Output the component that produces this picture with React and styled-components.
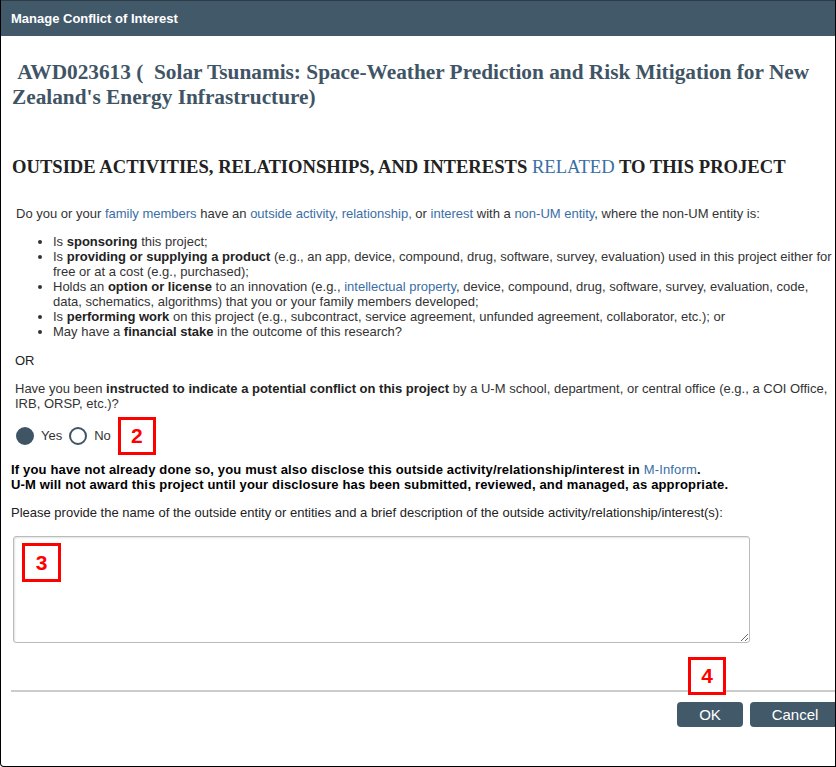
import React from "react";
import styled, { createGlobalStyle } from "styled-components";

const Global = createGlobalStyle`
  html, body { margin: 0; padding: 0; background: #fff; }
  body { font-family: "Liberation Sans", Arial, sans-serif; }
`;

const Dialog = styled.div`
  position: relative;
  box-sizing: border-box;
  width: 836px;
  height: 767px;
  border-left: 1px solid #000;
  border-right: 1px solid #000;
  border-bottom: 1px solid #000;
  border-bottom-left-radius: 4px;
  overflow: hidden;
  display: flex;
  flex-direction: column;
  background: #fff;
`;

const TitleBar = styled.div`
  height: 36px;
  flex: none;
  background: #42596a;
  border-top: 1px solid #2c3c48;
  box-sizing: border-box;
  display: flex;
  align-items: center;
  padding-left: 10px;
  color: #fff;
  font-size: 13px;
  font-weight: bold;
`;

const Body = styled.div`
  padding: 0 0 0 10px;
  display: flex;
  flex-direction: column;
  flex: 1;
`;

const ProjectTitle = styled.h1`
  margin: 24px 0 0 1px;
  font-family: "Liberation Serif", "Times New Roman", serif;
  font-size: 21.3px;
  line-height: 25px;
  font-weight: bold;
  color: #3f5566;
  white-space: pre-wrap;
`;

const SectionHeading = styled.h2`
  margin: 46px 0 0 1px;
  font-family: "Liberation Serif", "Times New Roman", serif;
  font-size: 18.6px;
  line-height: 21px;
  font-weight: bold;
  color: #222;
`;

const Related = styled.span`
  font-weight: normal;
  color: #3a6ea5;
`;

const Question = styled.div`
  padding-left: 4px;
  color: #333;
  font-size: 13px;
  line-height: 15px;
`;

const Para = styled.p`
  margin: ${(p) => p.$top || 0}px 0 0 ${(p) => p.$indent || 0}px;
  color: ${(p) => p.$color || "#333"};
  font-weight: ${(p) => (p.$bold ? "bold" : "normal")};
  letter-spacing: ${(p) => (p.$bold ? "0.16px" : "normal")};
  font-size: 13px;
  line-height: 15px;
`;

const Link = styled.span`
  color: #3a6ea5;
`;

const Strong = styled.b`
  color: #222;
`;

const Bullets = styled.ul`
  margin: 13px 0 0 0;
  padding-left: 38px;
  padding-right: 0;
  li {
    font-size: 13px;
    line-height: 15px;
    color: #333;
  }
`;

const RadioRow = styled.div`
  display: flex;
  align-items: center;
  margin-top: 6px;
  margin-left: 5px;
  height: 37px;
  font-size: 13px;
  color: #333;
`;

const Radio = styled.span`
  box-sizing: border-box;
  width: 18px;
  height: 18px;
  border-radius: 50%;
  border: 2px solid #3f5566;
  background: ${(p) => (p.$checked ? "#3f5566" : "#fff")};
  margin-right: 7px;
`;

const RadioLabel = styled.span`
  margin-right: 7px;
`;

const Marker = styled.div`
  box-sizing: border-box;
  width: ${(p) => p.$size || 38}px;
  height: ${(p) => p.$size || 38}px;
  border: 3px solid #ff0000;
  display: flex;
  align-items: center;
  justify-content: center;
  color: #ff0000;
  font-size: 21px;
  font-weight: bold;
  background: #fff;
`;

const Floating = styled.div`
  position: absolute;
  left: ${(p) => p.$left}px;
  top: ${(p) => p.$top}px;
`;

const AreaWrap = styled.div`
  position: relative;
  margin-top: 16px;
  margin-left: 2px;
  width: 737px;
  height: 107px;
`;

const TextArea = styled.textarea`
  box-sizing: border-box;
  width: 100%;
  height: 100%;
  border: 1px solid #bbb;
  border-radius: 3px;
  box-shadow: inset 1px 1px 2px rgba(0, 0, 0, 0.12);
  font-family: "Liberation Sans", Arial, sans-serif;
  font-size: 13px;
  padding: 6px;
  margin: 0;
  display: block;
`;

const Footer = styled.div`
  position: relative;
  margin-top: 47px;
  border-top: 2px solid #ccc;
  display: flex;
  justify-content: flex-end;
  gap: 7px;
  padding-top: 10px;
  margin-right: -5px;
`;

const Button = styled.button`
  box-sizing: border-box;
  width: ${(p) => p.$w}px;
  height: 25px;
  border: none;
  border-radius: 4px;
  background: #42596a;
  color: #fff;
  font-family: "Liberation Sans", Arial, sans-serif;
  font-size: 15px;
  padding: 0;
`;

export default function App() {
  return (
    <>
      <Global />
      <Dialog>
        <TitleBar>Manage Conflict of Interest</TitleBar>
        <Body>
          <ProjectTitle>
            {" AWD023613 (  Solar Tsunamis: Space-Weather Prediction and Risk Mitigation for New Zealand's Energy Infrastructure)"}
          </ProjectTitle>
          <SectionHeading>
            OUTSIDE ACTIVITIES, RELATIONSHIPS, AND INTERESTS <Related>RELATED</Related> TO THIS PROJECT
          </SectionHeading>
          <Question>
            <Para $top={29} $indent={1}>
              Do you or your <Link>family members</Link> have an <Link>outside activity, relationship,</Link> or{" "}
              <Link>interest</Link> with a <Link>non-UM entity</Link>, where the non-UM entity is:
            </Para>
            <Bullets>
              <li>
                Is <Strong>sponsoring</Strong> this project;
              </li>
              <li>
                Is <Strong>providing or supplying a product</Strong> (e.g., an app, device, compound, drug, software,
                survey, evaluation) used in this project either for free or at a cost (e.g., purchased);
              </li>
              <li>
                Holds an <Strong>option or license</Strong> to an innovation (e.g., <Link>intellectual property</Link>,
                device, compound, drug, software, survey, evaluation, code, data, schematics, algorithms) that you or your
                family members developed;
              </li>
              <li>
                Is <Strong>performing work</Strong> on this project (e.g., subcontract, service agreement, unfunded
                agreement, collaborator, etc.); or
              </li>
              <li>
                May have a <Strong>financial stake</Strong> in the outcome of this research?
              </li>
            </Bullets>
            <Para $top={14} $color="#222">
              OR
            </Para>
            <Para $top={13}>
              Have you been <Strong>instructed to indicate a potential conflict on this project</Strong> by a U-M school,
              department, or central office (e.g., a COI Office, IRB, ORSP, etc.)?
            </Para>
          </Question>
          <RadioRow>
            <Radio $checked />
            <RadioLabel>Yes</RadioLabel>
            <Radio />
            <RadioLabel>No</RadioLabel>
            <Marker $size={38}>2</Marker>
          </RadioRow>
          <Para $top={8} $bold $color="#000">
            If you have not already done so, you must also disclose this outside activity/relationship/interest in{" "}
            <Link style={{ fontWeight: "normal" }}>M-Inform</Link>.
            <br />
            U-M will not award this project until your disclosure has been submitted, reviewed, and managed, as
            appropriate.
          </Para>
          <Para $top={13} $color="#222">
            Please provide the name of the outside entity or entities and a brief description of the outside
            activity/relationship/interest(s):
          </Para>
          <AreaWrap>
            <TextArea />
            <Floating $left={9} $top={7}>
              <Marker $size={39}>3</Marker>
            </Floating>
          </AreaWrap>
          <Footer>
            <Floating $left={677} $top={-35}>
              <Marker $size={38}>4</Marker>
            </Floating>
            <Button $w={66}>OK</Button>
            <Button $w={90}>Cancel</Button>
          </Footer>
        </Body>
      </Dialog>
    </>
  );
}
